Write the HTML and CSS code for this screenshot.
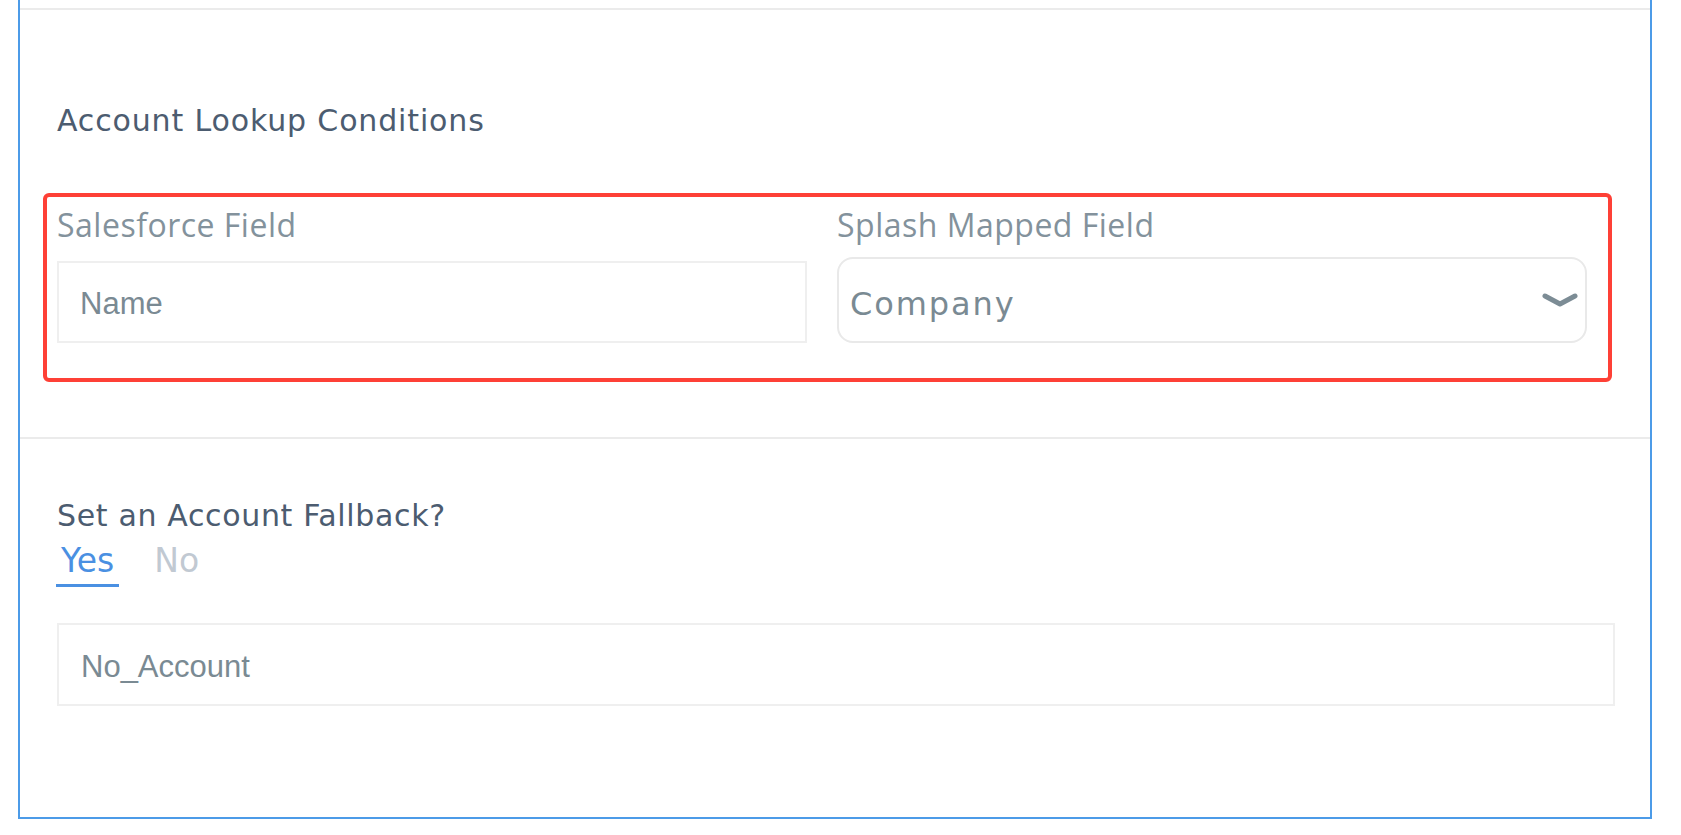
FILE: index.html
```html
<!DOCTYPE html>
<html lang="en">
<head>
<meta charset="utf-8">
<title>Account Lookup Conditions</title>
<link rel="stylesheet" href="styles.css">
</head>
<body>
<div class="panel">
  <div class="prev-section"></div>
  <section class="section lookup">
    <h2 class="section-title">Account Lookup Conditions</h2>
    <div class="highlight">
      <div class="field-row">
        <div class="field">
          <label class="field-label">Salesforce Field</label>
          <div class="text-input short"><span class="input-value">Name</span></div>
        </div>
        <div class="field">
          <label class="field-label">Splash Mapped Field</label>
          <div class="select">
            <span class="select-value">Company</span>
            <svg class="chevron" width="36" height="16" viewBox="0 0 36 16" aria-hidden="true">
              <polyline points="3,4 18,12 33,4" fill="none" stroke="#7c8c95" stroke-width="5" stroke-linecap="round" stroke-linejoin="round"/>
            </svg>
          </div>
        </div>
      </div>
    </div>
  </section>
  <section class="section fallback">
    <h2 class="section-title question">Set an Account Fallback?</h2>
    <div class="tabs">
      <span class="tab active">Yes</span>
      <span class="tab">No</span>
    </div>
    <div class="text-input wide"><span class="input-value">No_Account</span></div>
  </section>
</div>
</body>
</html>
```
FILE: styles.css
```css
* { box-sizing: border-box; }

html, body {
  margin: 0;
  padding: 0;
  background: #ffffff;
}

body {
  font-family: "DejaVu Sans", sans-serif;
  height: 835px;
  overflow: hidden;
}

.panel {
  margin-left: 18px;
  width: 1634px;
  border: 2px solid #4c9be8;
  border-top: none;
  background: #ffffff;
}

.prev-section {
  height: 10px;
  border-bottom: 2px solid #ebebeb;
}

.section {
  padding: 0 35px 0 37px;
}

.lookup {
  padding-top: 93px;
  padding-bottom: 55px;
  border-bottom: 2px solid #ebebeb;
}

.fallback {
  padding-top: 59px;
  padding-bottom: 111px;
}

.section-title {
  margin: 0;
  font-family: "DejaVu Sans", sans-serif;
  font-weight: normal;
  font-size: 30px;
  line-height: 36px;
  letter-spacing: 0.85px;
  color: #4c5c70;
}

.section-title.question {
  letter-spacing: 0.65px;
}

.lookup .section-title {
  margin-bottom: 54px;
}

.highlight {
  margin: 0 3px 0 -14px;
  border: 4px solid #fe4036;
  border-radius: 6px;
  padding: 9px 21px 35px 10px;
}

.field-row {
  display: grid;
  grid-template-columns: 1fr 1fr;
  column-gap: 30px;
}

.field {
  display: flex;
  flex-direction: column;
}

.field-label {
  font-family: "Open Sans", sans-serif;
  font-size: 32px;
  line-height: 38px;
  letter-spacing: 0.5px;
  color: #83929c;
  margin-bottom: 13px;
}

.text-input {
  display: flex;
  align-items: center;
  border: 2px solid #efefef;
  padding-left: 21px;
  font-family: "Liberation Sans", Arial, sans-serif;
  font-size: 31px;
  color: #7a8a93;
  background: #ffffff;
}

.input-value {
  margin-top: 4px;
}

.text-input.short {
  height: 82px;
  margin-top: 4px;
}

.text-input.wide {
  height: 83px;
  margin-top: 36px;
  padding-left: 22px;
}

.select {
  height: 86px;
  display: flex;
  align-items: center;
  justify-content: space-between;
  border: 2px solid #e9e9e9;
  border-radius: 16px;
  padding: 0 7px 0 11px;
  background: #ffffff;
}

.select-value {
  font-family: "DejaVu Sans", sans-serif;
  font-size: 32px;
  letter-spacing: 1.9px;
  color: #7a8a93;
  margin-top: 7px;
}

.chevron {
  display: block;
}

.tabs {
  display: flex;
  gap: 30px;
  margin-top: 9px;
  margin-left: -1px;
}

.tab {
  font-family: "DejaVu Sans", sans-serif;
  font-size: 33px;
  line-height: 36px;
  padding: 0 5px 5px;
  color: #c1c9d2;
  border-bottom: 3px solid transparent;
}

.tab.active {
  color: #4a90e2;
  border-bottom-color: #4a90e2;
}
```
